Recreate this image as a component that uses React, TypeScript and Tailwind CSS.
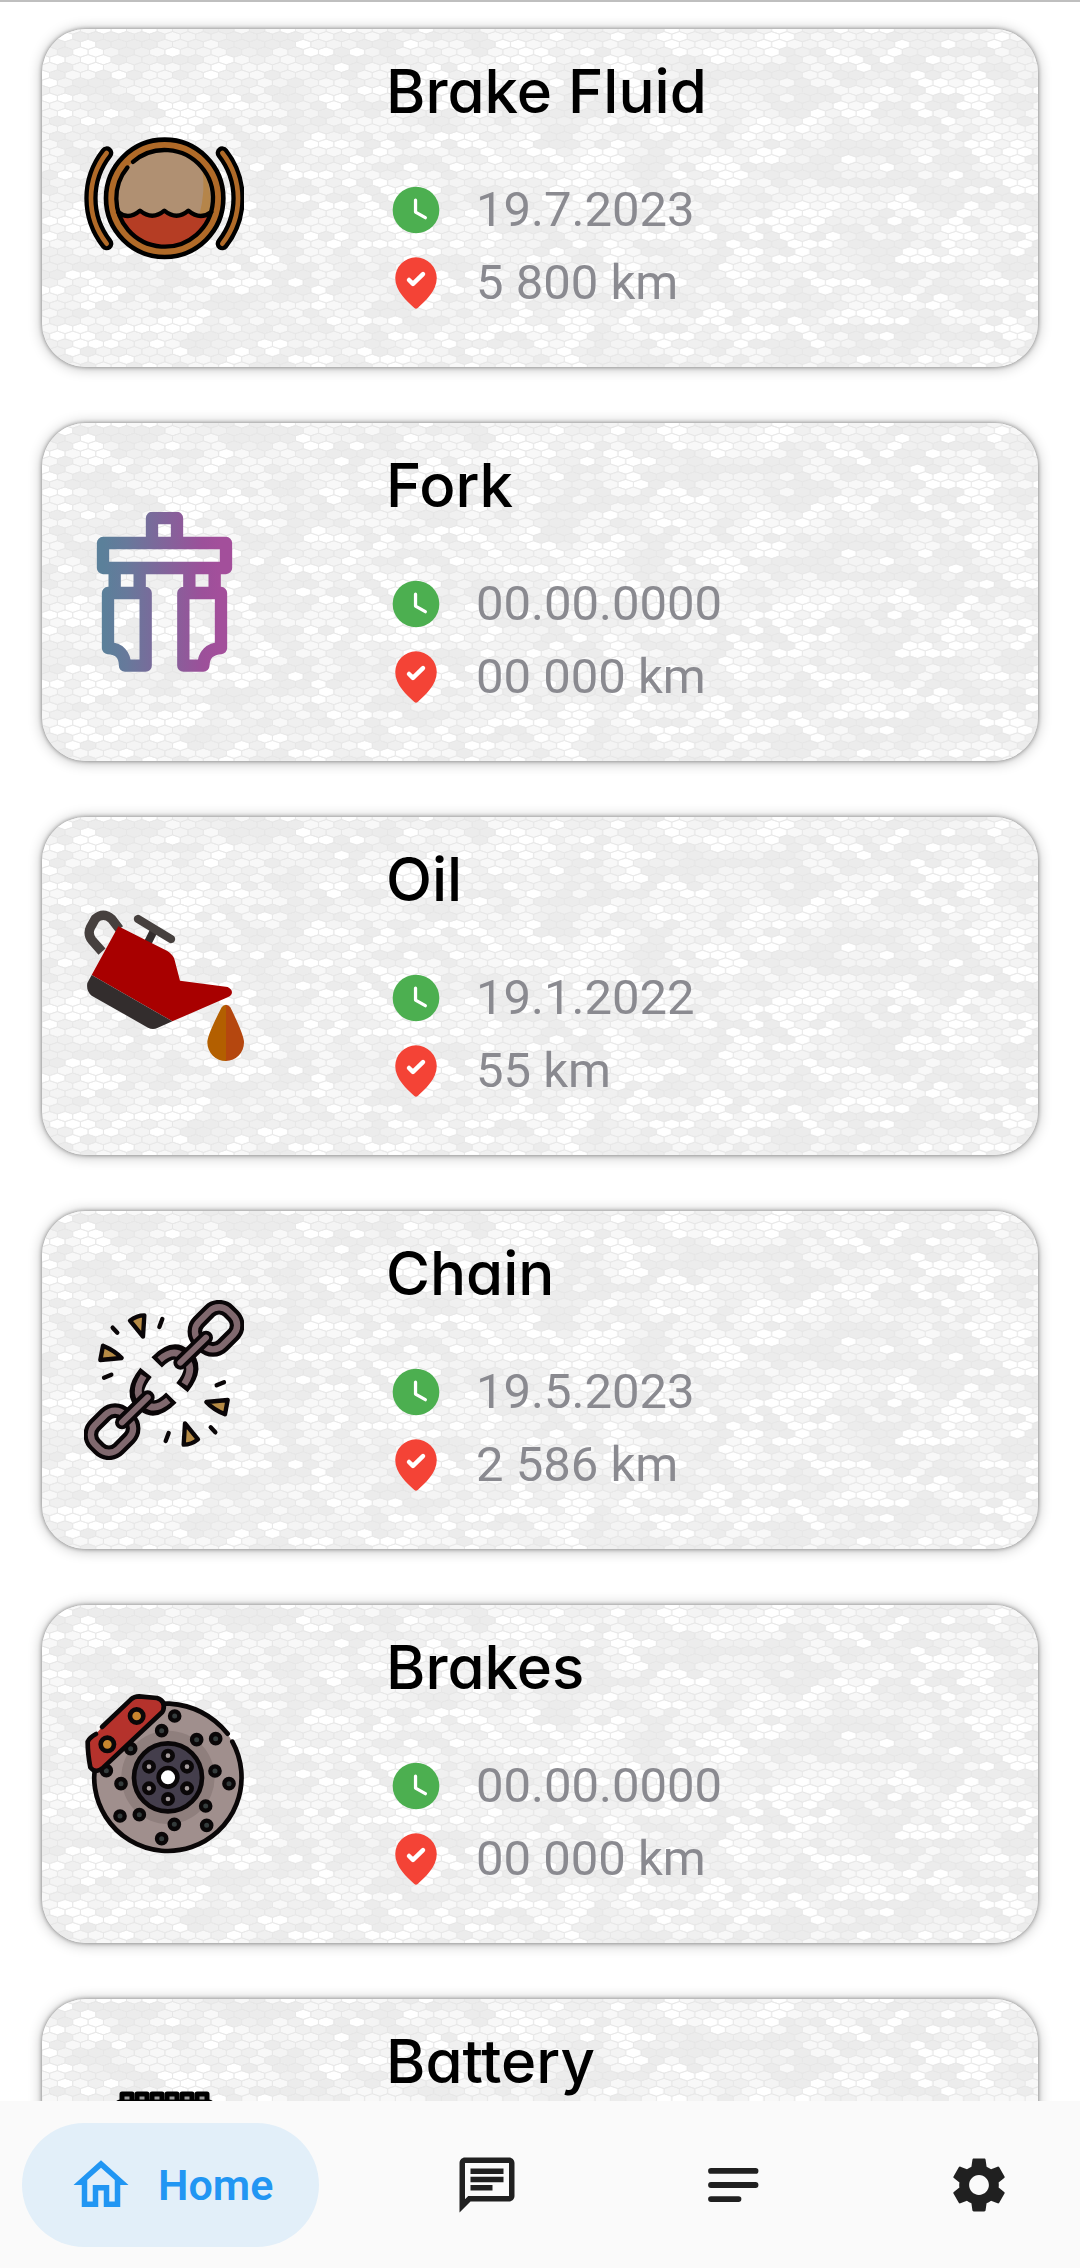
import type { ReactNode } from "react";

const HEX_W = 15.36;
const ROW_H = 7.68;
const COLS = 66;
const ROWS = 44;
const SHADES = ["#ececec", "#f0f0f0", "#f4f4f4", "#f8f8f8", "#ffffff"];

function buildHoneycomb(): string[] {
  let seed = 90210;
  const random = () => {
    seed = (seed + 0x6d2b79f5) | 0;
    let t = Math.imul(seed ^ (seed >>> 15), 1 | seed);
    t = (t + Math.imul(t ^ (t >>> 7), 61 | t)) ^ t;
    return ((t ^ (t >>> 14)) >>> 0) / 4294967296;
  };
  const paths = SHADES.map(() => "");
  const a = HEX_W / 2;
  const b = ROW_H / 3;
  const levels: number[][] = [];
  for (let r = 0; r <= ROWS; r++) {
    levels.push([]);
    for (let c = 0; c <= COLS; c++) {
      const v = random();
      const pick = random();
      let level = v < 0.24 ? 0 : v < 0.42 ? 1 : v < 0.58 ? 2 : v < 0.8 ? 3 : 4;
      if (pick < 0.16 && c > 0) level = levels[r][c - 1];
      else if (pick < 0.38 && r > 0) level = levels[r - 1][c];
      levels[r].push(level);
      const x = c * HEX_W + (r % 2 ? HEX_W / 2 : 0);
      const y = r * ROW_H;
      paths[level] +=
        `M${(x - a).toFixed(2)} ${(y - b).toFixed(2)}l${a} ${-b}l${a} ${b}v${2 * b}l${-a} ${b}l${-a} ${-b}z`;
    }
  }
  return paths;
}

const HONEYCOMB = buildHoneycomb();

function HoneycombDefs() {
  return (
    <svg className="absolute size-0" aria-hidden="true">
      <defs>
        <pattern id="honeycomb" width={COLS * HEX_W} height={ROWS * ROW_H} patternUnits="userSpaceOnUse">
          {HONEYCOMB.map((d, i) => (
            <path key={i} d={d} fill={SHADES[i]} />
          ))}
          {HONEYCOMB.map((d, i) => (
            <path key={i} d={d} fill="none" stroke="#e6e6e6" strokeWidth="0.8" />
          ))}
        </pattern>
      </defs>
    </svg>
  );
}

function BrakeFluidIcon() {
  return (
    <svg viewBox="252 356 480 480" className="size-40" fill="none" strokeLinecap="round">
      <circle cx="494" cy="597" r="176" fill="#b06a28" stroke="#000" strokeWidth="14" />
      <circle cx="494" cy="597" r="145" fill="#b09072" />
      <path d="M606 505Q640 570 628 640L598 648Q618 570 606 505z" fill="#b5854a" />
      <path d="M355 640Q385 664 420 634Q457 664 493 634Q530 664 565 634Q600 664 633 640A145 145 0 0 1 355 640z" fill="#b53d24" />
      <path d="M354 638Q385 664 420 634Q457 664 493 634Q530 664 565 634Q600 664 634 638" stroke="#000" strokeWidth="13" strokeLinejoin="round" />
      <circle cx="494" cy="597" r="145" stroke="#000" strokeWidth="13" strokeDasharray="886 25" transform="rotate(229 494 597)" />
      <path d="M320 461A220 220 0 0 0 320 733M667 461A220 220 0 0 1 667 733" stroke="#000" strokeWidth="40" />
      <path d="M320 461A220 220 0 0 0 320 733M667 461A220 220 0 0 1 667 733" stroke="#b06a28" strokeWidth="14" />
    </svg>
  );
}

function ForkIcon() {
  return (
    <svg viewBox="72 99 480 480" className="size-40" fill="none">
      <defs>
        <linearGradient id="fork-gradient" gradientUnits="userSpaceOnUse" x1="130" y1="0" x2="480" y2="0">
          <stop offset="0" stopColor="#5b809a" />
          <stop offset="0.2" stopColor="#67799b" />
          <stop offset="0.85" stopColor="#9c509a" />
          <stop offset="1" stopColor="#a34f9b" />
        </linearGradient>
      </defs>
      <path
        d="M276 192V117H351V192M129 192H498V267H129zM164 267V342M239 267V342M388 267V342M464 267V342M144 342H257V560H195Q195 510 144 507zM483 342H370V560H430Q432 510 483 507z"
        stroke="url(#fork-gradient)"
        strokeWidth="37"
        strokeLinejoin="round"
      />
    </svg>
  );
}

function OilIcon() {
  return (
    <svg viewBox="72 81 480 480" className="size-40" fill="none" strokeLinecap="round">
      <path d="M178 150L155 120Q130 98 106 119L91 146Q82 165 96 184L126 218" stroke="#46403e" strokeWidth="28" strokeLinecap="butt" />
      <path d="M280 158L263 192" stroke="#332d2d" strokeWidth="24" strokeLinecap="butt" />
      <path d="M234 120L333 180" stroke="#46403e" strokeWidth="25" />
      <path d="M175 142L322 216Q338 226 343 240L360 305L503 324Q522 334 513 348Q510 352 503 355L337 427L95 288z" fill="#a80000" />
      <path d="M95 288L337 427L292 447Q278 453 264 446L95 350Q78 336 82 312z" fill="#332d2d" />
      <path d="M485 385Q490 377 498 377V546A55 56 0 0 1 442 490Q442 468 485 385z" fill="#b35f00" />
      <path d="M511 385Q506 377 498 377V546A55 56 0 0 0 552 490Q552 468 511 385z" fill="#b5470f" />
    </svg>
  );
}

function ChainHalf() {
  return (
    <g strokeLinejoin="round">
      <rect x="405" y="95" width="126" height="100" rx="40" transform="rotate(-45 468 145)" stroke="#0a0608" strokeWidth="44" />
      <rect x="405" y="95" width="126" height="100" rx="40" transform="rotate(-45 468 145)" stroke="#80686e" strokeWidth="19" />
      <path d="M290 247Q338 198 372 226Q418 258 366 323" stroke="#0a0608" strokeWidth="44" />
      <path d="M299 239Q340 204 368 229Q408 258 373 312" stroke="#80686e" strokeWidth="20" />
      <path d="M361 248L438 173" stroke="#0a0608" strokeWidth="42" strokeLinecap="round" />
      <path d="M361 248L438 173" stroke="#80686e" strokeWidth="18" strokeLinecap="round" />
      <g stroke="#0a0608" strokeWidth="13" strokeLinecap="round">
        <path d="M210 122Q230 106 253 106L249 170z" fill="#b58a45" />
        <path d="M121 240L129 197Q165 212 185 234z" fill="#b58a45" />
        <path d="M158 143L172 158M307 117L298 141M132 293L154 284" />
      </g>
    </g>
  );
}

function ChainIcon() {
  return (
    <svg viewBox="72 60 480 480" className="size-40" fill="none">
      <ChainHalf />
      <g transform="rotate(180 312 300)">
        <ChainHalf />
      </g>
    </svg>
  );
}

const DISC_HOLES = [
  [345, 138], [306, 182], [411, 209], [468, 206], [466, 303], [508, 341], [438, 408], [441, 466],
  [344, 463], [306, 506], [239, 434], [181, 438], [184, 341], [140, 302], [213, 236],
];
const HUB_BOLTS = [[325, 257], [382, 290], [382, 355], [325, 387], [268, 355], [268, 290]];

function BrakesIcon() {
  return (
    <svg viewBox="73 72 480 480" className="size-40" fill="none" strokeLinecap="round" strokeLinejoin="round">
      <circle cx="325" cy="322" r="221" fill="#a08f8d" />
      <circle cx="325" cy="322" r="140" fill="#8f7f7d" />
      <path d="M518 215A221 221 0 1 1 330 101Q435 108 504 191" stroke="#0a0708" strokeWidth="14" />
      {DISC_HOLES.map(([x, y]) => (
        <circle key={`${x}-${y}`} cx={x} cy={y} r="14" fill="#343c3c" stroke="#0a0708" strokeWidth="13" />
      ))}
      <circle cx="325" cy="322" r="102" fill="#443e4c" stroke="#0a0708" strokeWidth="14" />
      {HUB_BOLTS.map(([x, y]) => (
        <circle key={`${x}-${y}`} cx={x} cy={y} r="14" fill="#a59c9c" stroke="#0a0708" strokeWidth="14" />
      ))}
      <circle cx="325" cy="322" r="28" fill="#fff" stroke="#0a0708" strokeWidth="14" />
      <path d="M127 171L214 88Q224 79 238 79L292 84Q318 92 311 120L308 126L128 295Q108 312 92 292Q84 250 84 215Q90 202 109 192" fill="#b5322c" stroke="#0a0708" strokeWidth="14" />
      <circle cx="231" cy="138" r="20" fill="#c8862e" stroke="#0a0708" strokeWidth="14" />
      <circle cx="143" cy="223" r="20" fill="#c8862e" stroke="#0a0708" strokeWidth="14" />
    </svg>
  );
}

function BatteryIcon() {
  return (
    <svg viewBox="0 0 160 160" className="size-40" fill="none" stroke="#000" strokeWidth="5" strokeLinejoin="round">
      {[38, 53, 68, 83, 98, 113].map((x) => (
        <path key={x} d={`M${x} 14V6H${x + 10}V14`} fill="#9a9a9a" />
      ))}
      <rect x="33" y="14" width="95" height="20" rx="3" fill="#5d5d5d" />
      <rect x="22" y="34" width="116" height="108" rx="5" fill="#b5322c" />
    </svg>
  );
}

function ClockIcon() {
  return (
    <svg viewBox="0 0 24 24" className="size-14" fill="none" aria-hidden="true">
      <circle cx="12" cy="12" r="10" fill="#4caf50" />
      <path d="M11.8 7.8V12.9L16 15.3" stroke="#fff" strokeWidth="1.4" strokeLinecap="round" strokeLinejoin="round" />
    </svg>
  );
}

function PinIcon() {
  return (
    <svg viewBox="0 0 24 24" className="size-14" fill="none" aria-hidden="true">
      <path d="M12 1a8.9 8.9 0 0 1 8.9 8.9c0 5.6-5 9.9-8.2 12.8q-.7.6-1.4 0C8.1 19.8 3.1 15.5 3.1 9.9A8.9 8.9 0 0 1 12 1z" fill="#f44336" />
      <path d="M9 10.7L10.7 12.4L15 8.2" stroke="#fff" strokeWidth="1.9" strokeLinecap="round" strokeLinejoin="round" />
    </svg>
  );
}

type Item = { title: string; date: string; distance: string; icon: ReactNode };

const ITEMS: Item[] = [
  { title: "Brake Fluid", date: "19.7.2023", distance: "5 800 km", icon: <BrakeFluidIcon /> },
  { title: "Fork", date: "00.00.0000", distance: "00 000 km", icon: <ForkIcon /> },
  { title: "Oil", date: "19.1.2022", distance: "55 km", icon: <OilIcon /> },
  { title: "Chain", date: "19.5.2023", distance: "2 586 km", icon: <ChainIcon /> },
  { title: "Brakes", date: "00.00.0000", distance: "00 000 km", icon: <BrakesIcon /> },
  { title: "Battery", date: "00.00.0000", distance: "00 000 km", icon: <BatteryIcon /> },
];

function ServiceCard({ title, date, distance, icon }: Item) {
  return (
    <li className="relative flex shrink-0 items-center overflow-hidden rounded-[44px] bg-[#f1f1f1] pl-[42px] shadow-[0_0_4px_rgba(0,0,0,0.42),0_1px_14px_rgba(0,0,0,0.28)]">
      <svg className="absolute inset-0 size-full" aria-hidden="true">
        <rect width="100%" height="100%" fill="url(#honeycomb)" />
      </svg>
      <div className="relative w-[302px] shrink-0">{icon}</div>
      <div className="relative flex-1 pt-[26px] pb-12">
        <h2 className="font-['Inter',sans-serif] text-[60px] leading-[72px] font-medium text-black [font-feature-settings:'cv11']">
          {title}
        </h2>
        <div className="mt-[46px] pl-0.5 text-[49px] leading-[73px] text-[#8a8a90]">
          <p className="flex items-center gap-8">
            <ClockIcon />
            {date}
          </p>
          <p className="flex items-center gap-8">
            <PinIcon />
            {distance}
          </p>
        </div>
      </div>
    </li>
  );
}

function NavButton({ label, children }: { label: string; children: ReactNode }) {
  return (
    <button type="button" aria-label={label} className="flex h-[124px] items-center rounded-full px-[46px] text-[#202020]">
      <svg viewBox="0 0 24 24" className="size-[66px]" fill="currentColor" aria-hidden="true">
        {children}
      </svg>
    </button>
  );
}

export default function App() {
  return (
    <div className="flex h-screen flex-col bg-white font-['Roboto',sans-serif]">
      <HoneycombDefs />
      <main className="min-h-0 flex-1 overflow-hidden border-t-2 border-[#bfbfbf]">
        <ul className="flex flex-col gap-14 px-[42px] pt-[27px]">
          {ITEMS.map((item) => (
            <ServiceCard key={item.title} {...item} />
          ))}
        </ul>
      </main>
      <nav className="flex shrink-0 items-center justify-between bg-[#fafafa] px-[22px] pt-[22px] pb-[21px]">
        <button
          type="button"
          aria-current="page"
          className="flex h-[124px] items-center gap-6 rounded-full bg-[#e2eff9] px-[46px] text-[43px] font-semibold text-[#2196f3]"
        >
          <svg viewBox="0 0 24 24" className="size-[66px]" fill="currentColor" aria-hidden="true">
            <path d="M12 5.69l5 4.5V18h-2v-6H9v6H7v-7.81l5-4.5M12 3L2 12h3v8h6v-6h2v6h6v-8h3L12 3z" />
          </svg>
          Home
        </button>
        <NavButton label="Messages">
          <path d="M4 4h16v12H5.17L4 17.17V4m0-2c-1.1 0-1.99.9-1.99 2L2 22l4-4h14c1.1 0 2-.9 2-2V4c0-1.1-.9-2-2-2H4zm2 10h8v2H6v-2zm0-3h12v2H6V9zm0-3h12v2H6V6z" />
        </NavButton>
        <NavButton label="Notes">
          <path d="M4 6.9h16.200M4 12h16.200M4 17.100h10" fill="none" stroke="currentColor" strokeWidth="2.100" strokeLinecap="round" />
        </NavButton>
        <NavButton label="Settings">
          <path d="M19.14 12.94c.04-.3.06-.61.06-.94 0-.32-.02-.64-.07-.94l2.03-1.58c.18-.14.23-.41.12-.61l-1.92-3.32c-.12-.22-.37-.29-.59-.22l-2.39.96c-.5-.38-1.03-.7-1.62-.94l-.36-2.54c-.04-.24-.24-.41-.48-.41h-3.84c-.24 0-.43.17-.47.41l-.36 2.54c-.59.24-1.13.57-1.62.94l-2.39-.96c-.22-.08-.47 0-.59.22L2.74 8.87c-.12.21-.08.47.12.61l2.03 1.58c-.05.3-.09.63-.09.94s.02.64.07.94l-2.03 1.58c-.18.14-.23.41-.12.61l1.92 3.32c.12.22.37.29.59.22l2.39-.96c.5.38 1.03.7 1.62.94l.36 2.54c.05.24.24.41.48.41h3.84c.24 0 .44-.17.47-.41l.36-2.54c.59-.24 1.13-.56 1.62-.94l2.39.96c.22.08.47 0 .59-.22l1.92-3.32c.12-.22.07-.47-.12-.61l-2.01-1.58zM12 15.6c-1.98 0-3.6-1.62-3.6-3.6s1.62-3.6 3.6-3.6 3.6 1.62 3.6 3.6-1.62 3.6-3.6 3.6z" />
        </NavButton>
      </nav>
    </div>
  );
}
